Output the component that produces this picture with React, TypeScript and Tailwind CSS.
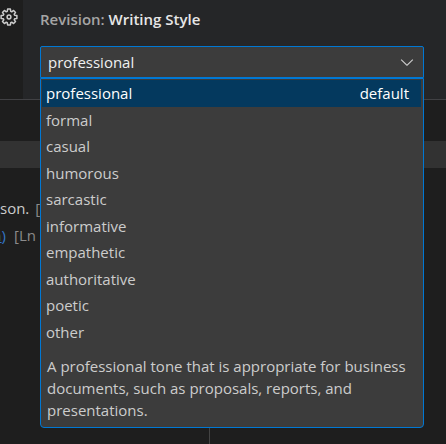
import { useState } from "react";
import { VscChevronDown } from "react-icons/vsc";

const styles = [
  "professional",
  "formal",
  "casual",
  "humorous",
  "sarcastic",
  "informative",
  "empathetic",
  "authoritative",
  "poetic",
  "other",
];

function gearOutline() {
  const points: string[] = [];
  const add = (radius: number, degrees: number) => {
    const a = (degrees * Math.PI) / 180;
    points.push(`${(9 + radius * Math.cos(a)).toFixed(2)} ${(9 + radius * Math.sin(a)).toFixed(2)}`);
  };
  for (let tooth = 0; tooth < 8; tooth++) {
    const center = tooth * 45;
    add(5.9, center - 17);
    add(8, center - 10);
    add(8, center + 10);
    add(5.9, center + 17);
  }
  return `M${points.join("L")}Z`;
}

function GearIcon() {
  return (
    <svg viewBox="0 0 18 18" className="size-[18px]" fill="none" stroke="currentColor" strokeWidth="1.5" strokeLinejoin="round">
      <path d={gearOutline()} />
      <circle cx="9" cy="9" r="1.9" />
    </svg>
  );
}

function StyleSelect() {
  const [value, setValue] = useState("professional");
  return (
    <div className="relative mt-4">
      <select
        id="writing-style"
        value={value}
        onChange={(e) => setValue(e.target.value)}
        className="block h-8 w-full appearance-none rounded-t-xs border border-[#0078d4] bg-[#3c3c3c] px-[7px] text-[15px] text-[#f0f0f0] outline-none"
      >
        {styles.map((s) => (
          <option key={s}>{s}</option>
        ))}
      </select>
      <VscChevronDown className="pointer-events-none absolute top-1.5 right-[7px] size-5 text-[#cccccc]" />
      <div className="absolute inset-x-0 top-full z-10 rounded-b-sm border border-[#0078d4] bg-[#3c3c3c] text-[15px]">
        <ul role="listbox" aria-label="Writing Style" className="grid h-[266px] grid-rows-10 pt-px pr-0.5 pl-px">
          {styles.map((s) => (
            <li
              key={s}
              role="option"
              aria-selected={s === value}
              onClick={() => setValue(s)}
              className={
                s === value
                  ? "flex items-center justify-between bg-[#04395e] pr-3 pl-1 text-white"
                  : "flex items-center justify-between pr-3 pl-1 text-[#cccccc]"
              }
            >
              <span>{s}</span>
              {s === "professional" && <span>default</span>}
            </li>
          ))}
        </ul>
        <p className="px-1.5 pt-2.5 pb-1.5 leading-[22px] text-[#cccccc]">
          A professional tone that is appropriate for business documents, such as proposals, reports, and presentations.
        </p>
      </div>
    </div>
  );
}

export default function App() {
  return (
    <div className="flex min-h-screen flex-col bg-[#1e1e1e] font-['Open_Sans','Noto_Sans',sans-serif] text-[15px] text-[#cccccc]">
      <section className="flex h-[100px] border-b border-[#414144]">
        <button aria-label="More actions" className="flex w-[23px] shrink-0 items-start pt-2">
          <GearIcon />
        </button>
        <div className="flex-1 bg-[#252628] pt-2 pr-[22px] pl-[17px]">
          <label htmlFor="writing-style" className="block leading-[22px] font-semibold text-[#a5a5a5]">
            Revision: <span className="text-[#e7e7e7]">Writing Style</span>
          </label>
          <StyleSelect />
        </div>
      </section>
      <section className="flex flex-1 flex-col pt-[41px] leading-[27px] whitespace-nowrap">
        <div className="h-[27px] bg-[#323232]" />
        <div className="h-[27px]" />
        <div className="flex gap-1.5">
          <span>son.</span>
          <span className="text-[#8b8b8b]">[</span>
        </div>
        <div className="flex gap-2">
          <a href="#rule" className="flex w-1.5 justify-end overflow-hidden text-[#3477c4]">
            <span className="underline">n</span>)
          </a>
          <span className="text-[#8b8b8b]">[Ln .</span>
        </div>
        <div className="flex flex-1">
          <div className="w-[210px] border-r border-[#444444]" />
        </div>
      </section>
    </div>
  );
}
